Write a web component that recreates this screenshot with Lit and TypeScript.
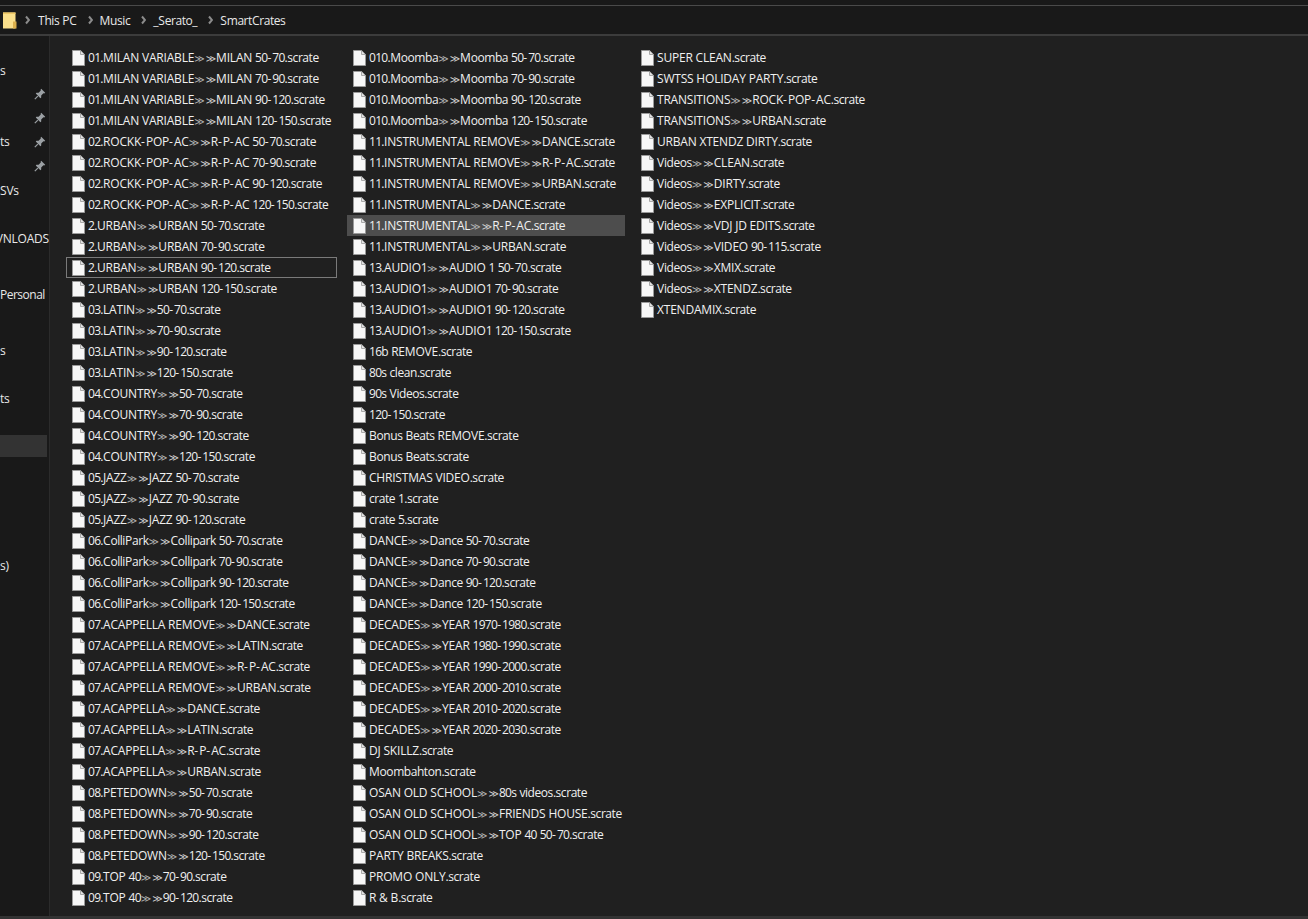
import { LitElement, css, html, svg } from "lit";
import { customElement } from "lit/decorators.js";

const SEP = "\u226B";

const col1 = [
  "01.MILAN VARIABLE>>MILAN 50-70", "01.MILAN VARIABLE>>MILAN 70-90", "01.MILAN VARIABLE>>MILAN 90-120", "01.MILAN VARIABLE>>MILAN 120-150",
  "02.ROCKK-POP-AC>>R-P-AC 50-70", "02.ROCKK-POP-AC>>R-P-AC 70-90", "02.ROCKK-POP-AC>>R-P-AC 90-120", "02.ROCKK-POP-AC>>R-P-AC 120-150",
  "2.URBAN>>URBAN 50-70", "2.URBAN>>URBAN 70-90", "2.URBAN>>URBAN 90-120", "2.URBAN>>URBAN 120-150",
  "03.LATIN>>50-70", "03.LATIN>>70-90", "03.LATIN>>90-120", "03.LATIN>>120-150",
  "04.COUNTRY>>50-70", "04.COUNTRY>>70-90", "04.COUNTRY>>90-120", "04.COUNTRY>>120-150",
  "05.JAZZ>>JAZZ 50-70", "05.JAZZ>>JAZZ 70-90", "05.JAZZ>>JAZZ 90-120",
  "06.ColliPark>>Collipark 50-70", "06.ColliPark>>Collipark 70-90", "06.ColliPark>>Collipark 90-120", "06.ColliPark>>Collipark 120-150",
  "07.ACAPPELLA REMOVE>>DANCE", "07.ACAPPELLA REMOVE>>LATIN", "07.ACAPPELLA REMOVE>>R-P-AC", "07.ACAPPELLA REMOVE>>URBAN",
  "07.ACAPPELLA>>DANCE", "07.ACAPPELLA>>LATIN", "07.ACAPPELLA>>R-P-AC", "07.ACAPPELLA>>URBAN",
  "08.PETEDOWN>>50-70", "08.PETEDOWN>>70-90", "08.PETEDOWN>>90-120", "08.PETEDOWN>>120-150",
  "09.TOP 40>>70-90", "09.TOP 40>>90-120",
];

const col2 = [
  "010.Moomba>>Moomba 50-70", "010.Moomba>>Moomba 70-90", "010.Moomba>>Moomba 90-120", "010.Moomba>>Moomba 120-150",
  "11.INSTRUMENTAL REMOVE>>DANCE", "11.INSTRUMENTAL REMOVE>>R-P-AC", "11.INSTRUMENTAL REMOVE>>URBAN",
  "11.INSTRUMENTAL>>DANCE", "11.INSTRUMENTAL>>R-P-AC", "11.INSTRUMENTAL>>URBAN",
  "13.AUDIO1>>AUDIO 1 50-70", "13.AUDIO1>>AUDIO1 70-90", "13.AUDIO1>>AUDIO1 90-120", "13.AUDIO1>>AUDIO1 120-150",
  "16b REMOVE", "80s clean", "90s Videos", "120-150", "Bonus Beats REMOVE", "Bonus Beats", "CHRISTMAS VIDEO", "crate 1", "crate 5",
  "DANCE>>Dance 50-70", "DANCE>>Dance 70-90", "DANCE>>Dance 90-120", "DANCE>>Dance 120-150",
  "DECADES>>YEAR 1970-1980", "DECADES>>YEAR 1980-1990", "DECADES>>YEAR 1990-2000", "DECADES>>YEAR 2000-2010", "DECADES>>YEAR 2010-2020", "DECADES>>YEAR 2020-2030",
  "DJ SKILLZ", "Moombahton", "OSAN OLD SCHOOL>>80s videos", "OSAN OLD SCHOOL>>FRIENDS HOUSE", "OSAN OLD SCHOOL>>TOP 40 50-70",
  "PARTY BREAKS", "PROMO ONLY", "R & B",
];

const col3 = [
  "SUPER CLEAN", "SWTSS HOLIDAY PARTY", "TRANSITIONS>>ROCK-POP-AC", "TRANSITIONS>>URBAN", "URBAN XTENDZ DIRTY",
  "Videos>>CLEAN", "Videos>>DIRTY", "Videos>>EXPLICIT", "Videos>>VDJ JD EDITS", "Videos>>VIDEO 90-115", "Videos>>XMIX", "Videos>>XTENDZ", "XTENDAMIX",
];

const crumbs = ["This PC", "Music", "_Serato_", "SmartCrates"];

const chevron = svg`<path d="M1 1.5 4 5 1 8.5" fill="none" stroke="#8c8c8c" stroke-width="2"/>`;

const pin = html`<svg class="pin" width="12" height="12" viewBox="0 0 12 12">
  <path d="M7.2.8 11.2 4.8 10.3 5.4 9.4 5.2 7.2 7.4 7.2 9.6 6.4 10.2 1.8 5.6 2.4 4.8 4.6 4.8 6.8 2.6 6.6 1.7Z" fill="#9ba0a4"/>
  <path d="M3.8 8.2.8 11.2" stroke="#9ba0a4" stroke-width="1.2"/>
</svg>`;

const fileIcon = html`<svg class="file" width="13" height="16" viewBox="0 0 13 16">
  <path d="M.5.5H8.6L12.5 4.4V15.5H.5Z" fill="#f7f7f7" stroke="#9a9a9a"/>
  <path d="M8.5.8V4.5H12.2" fill="#e2e2e2" stroke="#a8a8a8"/>
</svg>`;

// Open Sans is wider than the original UI font on digits and lowercase and
// narrower on hyphens, so each kind of run gets its own tracking.
function runs(text: string) {
  return text.split(/(\d+|-|[a-z.]+)/).filter(Boolean).map((run) => {
    if (/^\d/.test(run)) return html`<span class="d">${run}</span>`;
    if (run === "-") return html`<span class="h">${run}</span>`;
    if (/^[a-z.]/.test(run)) return html`<span class="l">${run}</span>`;
    return run;
  });
}

@customElement("app-root")
export class AppRoot extends LitElement {
  static styles = css`
    :host {
      display: block;
      width: 1308px;
      height: 919px;
      overflow: hidden;
      background: #202020;
      color: #f0f0f0;
      font-family: "Open Sans", "Noto Sans", sans-serif;
      font-size: 12px;
      letter-spacing: -0.2px;
    }
    .d {
      letter-spacing: -0.7px;
    }
    .h {
      letter-spacing: 1px;
    }
    .l {
      letter-spacing: -0.44px;
    }
    .top {
      height: 5px;
      background: #191919;
      border-bottom: 1px solid #4a4a4a;
    }
    .address {
      height: 28px;
      display: flex;
      align-items: center;
      background: #191919;
      border-bottom: 2px solid #3c3c3c;
    }
    .folder {
      margin-left: 3px;
      flex: none;
    }
    .crumb {
      font-size: 12px;
      color: #e8e8e8;
    }
    .chev {
      margin: 0 7px 0 11px;
      flex: none;
    }
    .chev.first {
      margin-left: 8px;
      margin-right: 8px;
    }
    .main {
      display: flex;
      height: 880px;
    }
    .nav {
      width: 49px;
      flex: none;
      background: #191919;
      border-right: 1px solid #2b2b2b;
      position: relative;
    }
    .nav-row {
      position: absolute;
      right: 2px;
      left: 0;
      display: flex;
      align-items: center;
      justify-content: flex-end;
      height: 22px;
      font-size: 12px;
      color: #e8e8e8;
      white-space: nowrap;
    }
    .nav-row.left {
      justify-content: flex-start;
      overflow: hidden;
    }
    .nav-row.tight {
      letter-spacing: -0.5px;
    }
    .nav-row.flush {
      right: 0;
    }
    .nav-row.sel {
      background: #333333;
    }
    .pin {
      margin-right: 1px;
    }
    .list {
      display: flex;
      flex: 1;
      padding: 11px 0 0 16px;
      align-items: flex-start;
    }
    .col {
      display: flex;
      flex-direction: column;
    }
    .col.a {
      width: 271px;
      margin-right: 10px;
    }
    .col.b {
      width: 278px;
      margin-right: 10px;
    }
    .col.c {
      width: 280px;
    }
    .row {
      height: 21px;
      display: flex;
      align-items: center;
      padding-left: 6px;
      box-sizing: border-box;
      white-space: nowrap;
      color: #f0f0f0;
    }
    .row.focus {
      outline: 1px solid #7a7a7a;
      outline-offset: -1px;
    }
    .row.hover {
      background: #4d4d4d;
    }
    .file {
      flex: none;
      margin-right: 3px;
    }
    .sep {
      font-family: "DejaVu Sans", sans-serif;
      font-size: 10px;
      letter-spacing: 0;
    }
    .sep .a {
      color: #b4b4b4;
      margin-right: 1px;
    }
    .sep .b {
      color: #d2d2d2;
    }
    .bottom {
      height: 3px;
      background: #333333;
    }
  `;

  private label(name: string) {
    const parts = name.split(">>");
    return parts.length === 2
      ? html`${runs(parts[0])}<span class="sep"><span class="a">${SEP}</span><span class="b">${SEP}</span></span>${runs(parts[1])}${runs(".scrate")}`
      : html`${runs(name)}${runs(".scrate")}`;
  }

  private column(cls: string, items: string[], focus = -1, hover = -1) {
    return html`<div class="col ${cls}">
      ${items.map(
        (name, i) => html`<div class="row ${i === focus ? "focus" : ""} ${i === hover ? "hover" : ""}">
          ${fileIcon}<span>${this.label(name)}</span>
        </div>`
      )}
    </div>`;
  }

  private navRow(top: number, text: string, cls = "") {
    return html`<div class="nav-row ${cls}" style="top:${top}px">${text}</div>`;
  }

  render() {
    return html`
      <div class="top"></div>
      <div class="address">
        <svg class="folder" width="14" height="17" viewBox="0 0 14 17">
          <path d="M0 .5H12.5V16.5H0Z" fill="#fbe08c"/>
          <path d="M0 .5H12.5V2H0Z" fill="#eec765"/>
          <path d="M10 9.5H13.5V16.5H10Z" fill="#dcb04c"/>
        </svg>
        ${crumbs.map(
          (c, i) => html`<svg class="chev ${i === 0 ? "first" : ""}" width="5" height="10" viewBox="0 0 5 10">${chevron}</svg><span class="crumb">${runs(c)}</span>`
        )}
      </div>
      <div class="main">
        <div class="nav">
          ${this.navRow(23, "s", "left")}
          <div class="nav-row" style="top:47px">${pin}</div>
          <div class="nav-row" style="top:71px">${pin}</div>
          ${this.navRow(94, "ts", "left")}
          <div class="nav-row" style="top:95px">${pin}</div>
          <div class="nav-row" style="top:119px">${pin}</div>
          ${this.navRow(143, "SVs", "left")}
          ${this.navRow(191, "VNLOADS", "flush")}
          ${this.navRow(247, "Personal", "left tight")}
          ${this.navRow(303, "s", "left")}
          ${this.navRow(351, "ts", "left")}
          ${this.navRow(399, "", "sel")}
          ${this.navRow(518, "s)", "left")}
        </div>
        <div class="list">
          ${this.column("a", col1, 10)}
          ${this.column("b", col2, -1, 8)}
          ${this.column("c", col3)}
        </div>
      </div>
      <div class="bottom"></div>
    `;
  }
}
